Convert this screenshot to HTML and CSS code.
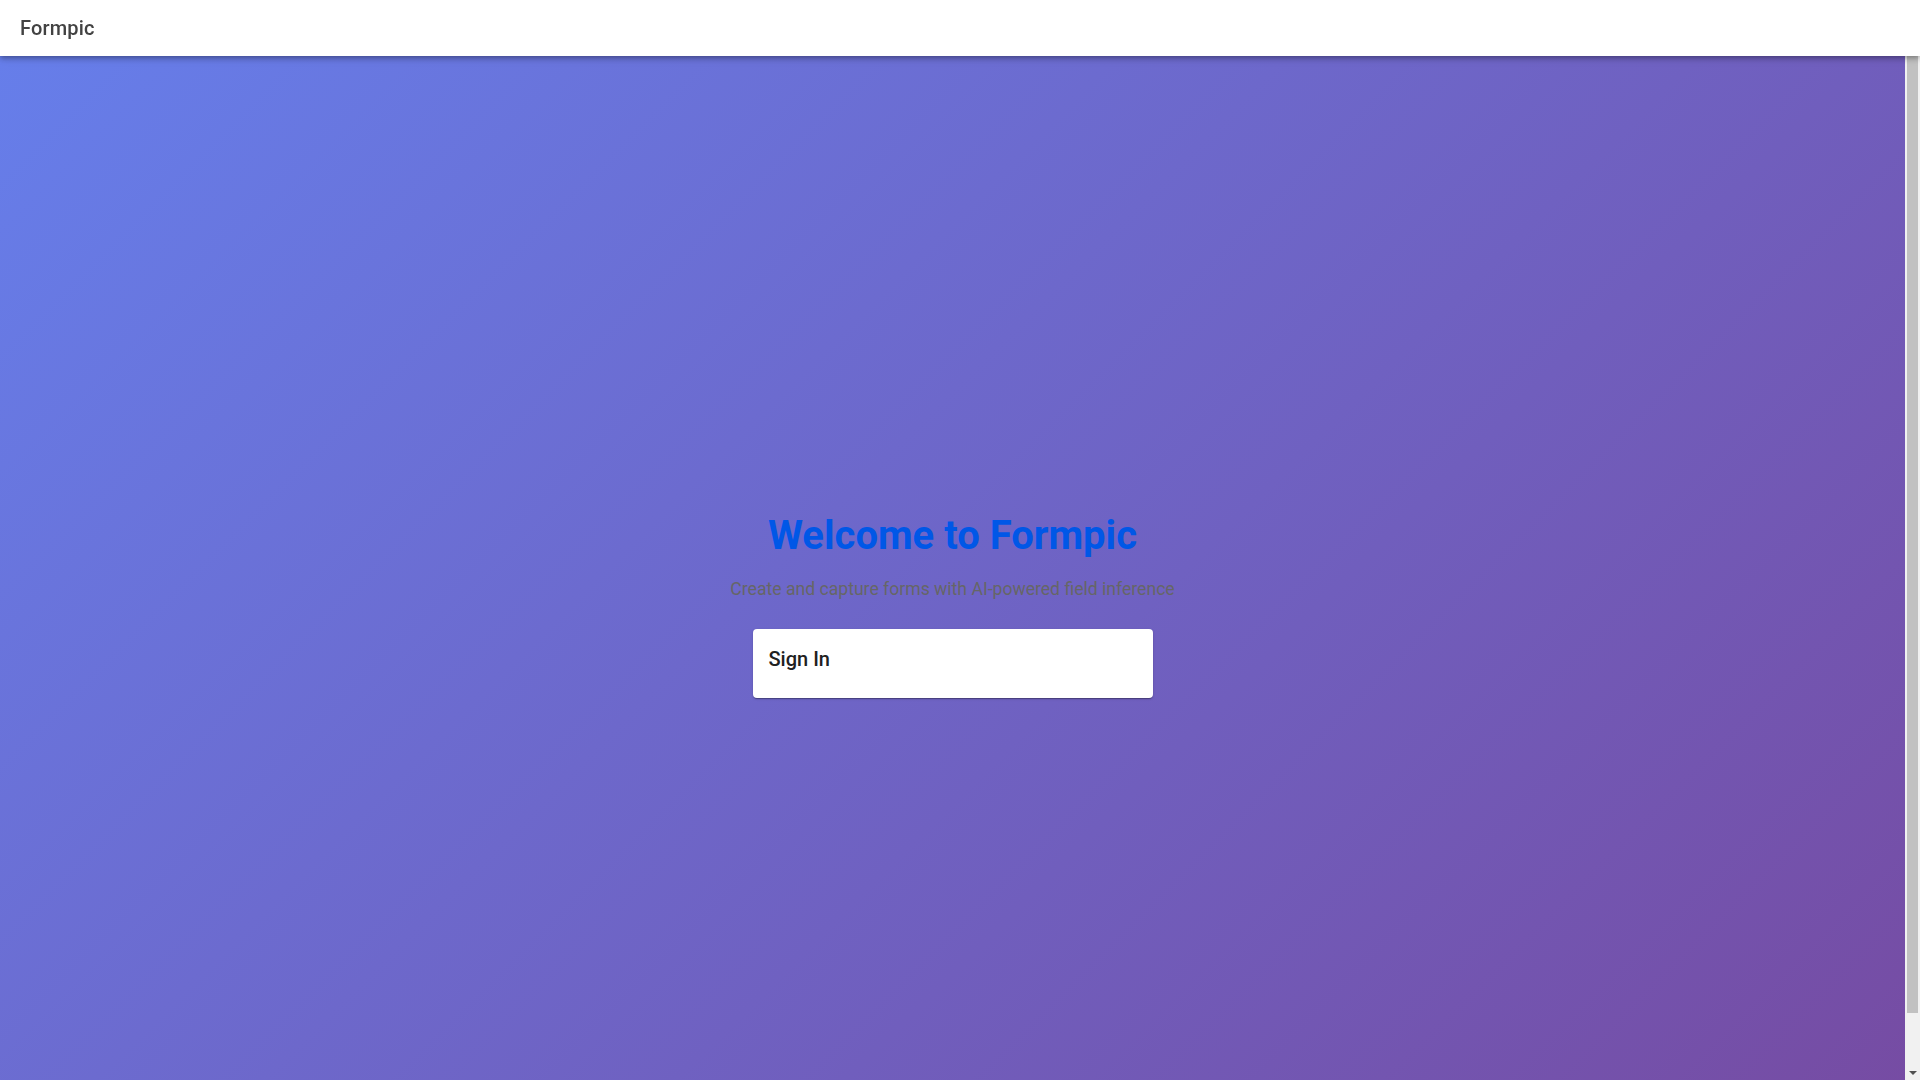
FILE: index.html
```html
<!DOCTYPE html>
<html lang="en">
<head>
<meta charset="utf-8">
<title>Formpic</title>
<link rel="stylesheet" href="styles.css">
</head>
<body>
<header class="appbar">
  <div class="brand">Formpic</div>
</header>
<div class="app">
  <div class="viewport">
    <div class="spacer"></div>
    <main class="hero">
      <div class="intro">
        <h1 class="title">Welcome to Formpic</h1>
        <p class="subtitle">Create and capture forms with AI-powered field inference</p>
        <div class="card">
          <h2 class="card-title">Sign In</h2>
        </div>
      </div>
    </main>
  </div>
  <div class="scrollbar" aria-hidden="true">
    <div class="sb-button"><span class="sb-arrow-up"></span></div>
    <div class="sb-track"><div class="sb-thumb"></div></div>
    <div class="sb-button"><span class="sb-arrow-down"></span></div>
  </div>
</div>
</body>
</html>
```
FILE: styles.css
```css
html, body {
  margin: 0;
  padding: 0;
  height: 100%;
  overflow: hidden;
}
body {
  font-family: Roboto, "Liberation Sans", Arial, sans-serif;
}
.app {
  display: flex;
  height: 100vh;
}
.viewport {
  flex: 1;
  overflow: hidden;
}
.scrollbar {
  width: 15px;
  flex: none;
  background: #f1f1f1;
  display: flex;
  flex-direction: column;
}
.sb-button {
  height: 15px;
  display: flex;
  align-items: center;
  justify-content: center;
}
.sb-arrow-up,
.sb-arrow-down {
  width: 0;
  height: 0;
  border-left: 4px solid transparent;
  border-right: 4px solid transparent;
}
.sb-arrow-up {
  border-bottom: 4px solid #505050;
}
.sb-arrow-down {
  border-top: 4px solid #505050;
}
.sb-track {
  flex: 1;
  padding: 0 2px;
  display: flex;
  flex-direction: column;
}
.sb-thumb {
  height: 998px;
  background: #c1c1c1;
}
.appbar {
  position: fixed;
  top: 0;
  left: 0;
  width: 100%;
  height: 56px;
  background: #fff;
  display: flex;
  align-items: center;
  padding: 0 20px;
  box-sizing: border-box;
  box-shadow: 0 2px 4px -1px rgba(0,0,0,0.2), 0 4px 5px 0 rgba(0,0,0,0.14), 0 1px 10px 0 rgba(0,0,0,0.12);
  z-index: 10;
}
.brand {
  font-size: 20px;
  font-weight: 500;
  color: #424242;
  letter-spacing: 0.15px;
}
.spacer {
  height: 56px;
}
.hero {
  min-height: 100vh;
  background: linear-gradient(135deg, #667eea 0%, #764ba2 100%);
  display: flex;
  align-items: center;
  justify-content: center;
  box-sizing: border-box;
}
.intro {
  display: flex;
  flex-direction: column;
  align-items: center;
  margin-top: 18px;
}
.title {
  margin: 0;
  font-size: 40px;
  line-height: 1.2;
  font-weight: 700;
  color: #0057e7;
}
.subtitle {
  margin: 16px 0 26px;
  font-size: 17.6px;
  line-height: 1.5;
  color: #666;
}
.card {
  width: 400px;
  background: #fff;
  border-radius: 4px;
  box-shadow: 0 2px 1px -1px rgba(0,0,0,0.2), 0 1px 1px 0 rgba(0,0,0,0.14), 0 1px 3px 0 rgba(0,0,0,0.12);
  padding: 16px 16px 24px;
  box-sizing: border-box;
}
.card-title {
  margin: 0;
  font-size: 20px;
  font-weight: 500;
  line-height: 29px;
  color: #212121;
}
```
